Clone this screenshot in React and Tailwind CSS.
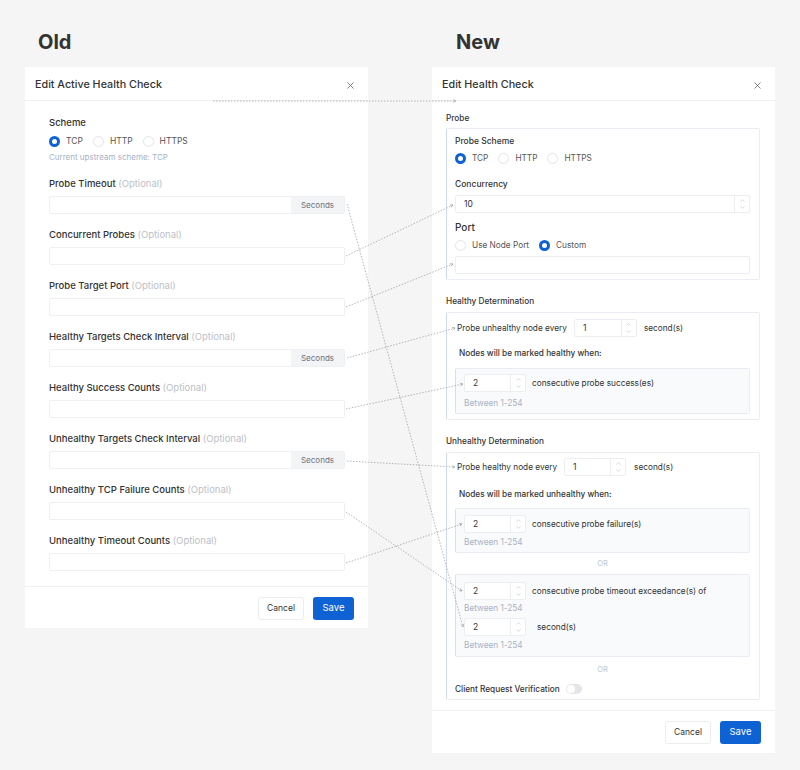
import { X, ChevronUp, ChevronDown } from 'lucide-react'

const leftFields = [
  { label: 'Probe Timeout', seconds: true },
  { label: 'Concurrent Probes' },
  { label: 'Probe Target Port' },
  { label: 'Healthy Targets Check Interval', seconds: true },
  { label: 'Healthy Success Counts' },
  { label: 'Unhealthy Targets Check Interval', seconds: true },
  { label: 'Unhealthy TCP Failure Counts' },
  { label: 'Unhealthy Timeout Counts' },
]

// connector lines between the old and the new form (page coordinates)
const links = [
  [213, 101, 456, 101],
  [347, 204, 463, 627],
  [346, 256, 453, 205],
  [346, 307, 453, 264],
  [347, 358, 455, 328],
  [346, 409, 463, 384],
  [347, 461, 455, 467],
  [346, 512, 462, 591],
  [346, 563, 462, 524],
]

function Radio({ checked, label }) {
  return (
    <span className="flex items-center gap-[6px]">
      <span
        className={
          checked
            ? 'h-[11px] w-[11px] rounded-full border-[3.5px] border-[#0e62d4] bg-white'
            : 'h-[11px] w-[11px] rounded-full border border-[#e2e5ea] bg-white'
        }
      />
      <span>{label}</span>
    </span>
  )
}

function NumberInput({ value, className = '' }) {
  return (
    <div className={`flex h-[18px] rounded-[2px] border border-[#eceef2] bg-white ${className}`}>
      <div className="flex flex-1 items-center pl-[8px] text-[8.5px] text-[#333]">{value}</div>
      <div className="flex w-[15px] flex-col items-center justify-center border-l border-[#eceef2] text-[#a3a9b3]">
        <ChevronUp size={7} strokeWidth={1.5} />
        <ChevronDown size={7} strokeWidth={1.5} />
      </div>
    </div>
  )
}

function Header({ title }) {
  return (
    <div className="flex h-[34px] items-center justify-between border-b border-[#f0f1f3] pl-[10px] pr-[12px] pt-[3px]">
      <span className="text-[10.75px] font-medium text-[#333]">{title}</span>
      <X size={11} strokeWidth={1.6} className="text-[#555]" />
    </div>
  )
}

function Footer({ bottom }) {
  return (
    <div className={`flex justify-end gap-[9px] border-t border-[#f0f1f3] pr-[14px] pt-[10px] ${bottom}`}>
      <button className="h-[23px] w-[46px] rounded-[3px] border border-[#ebedf0] bg-white text-[8.5px] text-[#333]">
        Cancel
      </button>
      <button className="h-[23px] w-[41px] rounded-[3px] bg-[#0e62d4] text-[9.5px] text-white">Save</button>
    </div>
  )
}

function OldPanel() {
  return (
    <div className="w-[343px] bg-white">
      <Header title="Edit Active Health Check" />
      <div className="pb-[15px] pl-[24px] pr-[23px] pt-[15px]">
        <div className="h-[14px] text-[9.5px] font-medium leading-[14px] text-[#333]">Scheme</div>
        <div className="mt-[4px] flex h-[14px] items-center gap-[10px] text-[8.5px] text-[#555]">
          <Radio checked label="TCP" />
          <Radio label="HTTP" />
          <Radio label="HTTPS" />
        </div>
        <div className="mt-[3px] h-[12px] text-[8px] leading-[12px] text-[#a7b2c8]">
          Current upstream scheme: TCP
        </div>
        {leftFields.map((f, i) => (
          <div key={i} className="mt-[14px]">
            <div className="h-[14px] text-[9.5px] font-medium leading-[14px] text-[#333]">
              {f.label} <span className="font-normal text-[#bcc1c9]">(Optional)</span>
            </div>
            <div className="mt-[5px] flex h-[18px] rounded-[2px] border border-[#eef0f3] bg-white">
              <div className="flex-1" />
              {f.seconds && (
                <div className="flex w-[53px] items-center justify-center bg-[#f3f4f6] text-[8px] text-[#6b7280]">
                  Seconds
                </div>
              )}
            </div>
          </div>
        ))}
      </div>
      <Footer bottom="pb-[8px]" />
    </div>
  )
}

function Between() {
  return <div className="h-[12px] text-[8.25px] leading-[12px] text-[#a9b2c4]">Between 1-254</div>
}

function Or({ className }) {
  return <div className={`h-[12px] text-center text-[7.5px] leading-[12px] text-[#c2c6cd] ${className}`}>OR</div>
}

const box = 'border border-[#eaeef4] border-l-[#cfdcf0] rounded-[2px] bg-white'
const innerBox = 'border border-[#e9edf3] border-l-[#d6e0ef] rounded-[2px] bg-[#f9fafc] pl-[8px]'
const sectionTitle = 'h-[14px] text-[8.25px] font-medium leading-[14px] text-[#333]'

function NewPanel() {
  return (
    <div className="w-[343px] bg-white">
      <Header title="Edit Health Check" />
      <div className="pb-[10px] pl-[14px] pr-[15px] pt-[10px] text-[8.25px] text-[#333]">
        <div className={sectionTitle}>Probe</div>
        <div className={`mt-[3px] pb-[5px] pl-[8px] pr-[9px] pt-[5px] ${box}`}>
          <div className="h-[14px] text-[8.5px] font-medium leading-[14px]">Probe Scheme</div>
          <div className="mt-[3px] flex h-[14px] items-center gap-[10px] text-[8.25px] text-[#555]">
            <Radio checked label="TCP" />
            <Radio label="HTTP" />
            <Radio label="HTTPS" />
          </div>
          <div className="mt-[12px] h-[14px] text-[8.5px] font-medium leading-[14px]">Concurrency</div>
          <NumberInput value="10" className="mt-[4px]" />
          <div className="mt-[7px] h-[15px] text-[10px] font-medium leading-[15px]">Port</div>
          <div className="mt-[3px] flex h-[14px] items-center gap-[10px] text-[8.25px] text-[#555]">
            <Radio label="Use Node Port" />
            <Radio checked label="Custom" />
          </div>
          <div className="mt-[4px] h-[18px] rounded-[2px] border border-[#eceef2] bg-white" />
        </div>

        <div className={`mt-[14px] ${sectionTitle}`}>Healthy Determination</div>
        <div className={`mt-[4px] pb-[5px] pl-[8px] pr-[9px] pt-[6px] ${box}`}>
          <div className="flex h-[18px] items-center pl-[2px]">
            <span>Probe unhealthy node every</span>
            <NumberInput value="1" className="ml-[7px] w-[63px]" />
            <span className="ml-[7px]">second(s)</span>
          </div>
          <div className="mt-[9px] h-[14px] pl-[4px] font-medium leading-[14px]">
            Nodes will be marked healthy when:
          </div>
          <div className={`mt-[8px] pb-[4px] pt-[5px] ${innerBox}`}>
            <div className="flex h-[18px] items-center">
              <NumberInput value="2" className="w-[62px]" />
              <span className="ml-[6px]">consecutive probe success(es)</span>
            </div>
            <div className="mt-[5px]">
              <Between />
            </div>
          </div>
        </div>

        <div className={`mt-[14px] ${sectionTitle}`}>Unhealthy Determination</div>
        <div className={`mt-[4px] pb-[3px] pl-[8px] pr-[9px] pt-[5px] ${box}`}>
          <div className="flex h-[18px] items-center pl-[2px]">
            <span>Probe healthy node every</span>
            <NumberInput value="1" className="ml-[7px] w-[62px]" />
            <span className="ml-[8px]">second(s)</span>
          </div>
          <div className="mt-[11px] h-[14px] pl-[4px] font-medium leading-[14px]">
            Nodes will be marked unhealthy when:
          </div>
          <div className={`mt-[7px] pb-[4px] pt-[6px] ${innerBox}`}>
            <div className="flex h-[18px] items-center">
              <NumberInput value="2" className="w-[62px]" />
              <span className="ml-[6px]">consecutive probe failure(s)</span>
            </div>
            <div className="mt-[3px]">
              <Between />
            </div>
          </div>
          <Or className="mt-[5px]" />
          <div className={`mt-[4px] pb-[5px] pt-[7px] ${innerBox}`}>
            <div className="flex h-[18px] items-center">
              <NumberInput value="2" className="w-[62px]" />
              <span className="ml-[6px]">consecutive probe timeout exceedance(s) of</span>
            </div>
            <div className="mt-[2px]">
              <Between />
            </div>
            <div className="mt-[4px] flex h-[18px] items-center">
              <NumberInput value="2" className="w-[62px]" />
              <span className="ml-[11px]">second(s)</span>
            </div>
            <div className="mt-[3px]">
              <Between />
            </div>
          </div>
          <Or className="mt-[7px]" />
          <div className="mt-[6px] flex h-[14px] items-center gap-[6px]">
            <span className="font-medium">Client Request Verification</span>
            <span className="flex h-[10px] w-[16px] items-center rounded-full bg-[#e3e5e9] px-[1px]">
              <span className="h-[8px] w-[8px] rounded-full bg-white" />
            </span>
          </div>
        </div>
      </div>
      <Footer bottom="pb-[9px]" />
    </div>
  )
}

export default function App() {
  return (
    <div className="relative h-[770px] w-[800px] overflow-hidden bg-[#f5f5f5] font-['Inter',sans-serif]">
      <div className="flex gap-[64px] pl-[25px] pt-[29px]">
        <div>
          <div className="h-[38px] pl-[13px] text-[20px] font-bold leading-[26px] text-[#333]">Old</div>
          <OldPanel />
        </div>
        <div>
          <div className="h-[38px] pl-[24px] text-[20px] font-bold leading-[26px] text-[#333]">New</div>
          <NewPanel />
        </div>
      </div>
      <svg className="pointer-events-none absolute left-0 top-0" width="800" height="770">
        <defs>
          <marker id="arrow" viewBox="0 0 6 6" refX="5" refY="3" markerWidth="5" markerHeight="5" orient="auto">
            <path d="M1 1 L5 3 L1 5" fill="none" stroke="#9a9a9a" strokeWidth="1" />
          </marker>
        </defs>
        {links.map(([x1, y1, x2, y2], i) => (
          <line
            key={i}
            x1={x1}
            y1={y1}
            x2={x2}
            y2={y2}
            stroke="#a3a3a3"
            strokeWidth="0.8"
            strokeDasharray="1.5 1.5"
            markerEnd="url(#arrow)"
          />
        ))}
      </svg>
    </div>
  )
}
